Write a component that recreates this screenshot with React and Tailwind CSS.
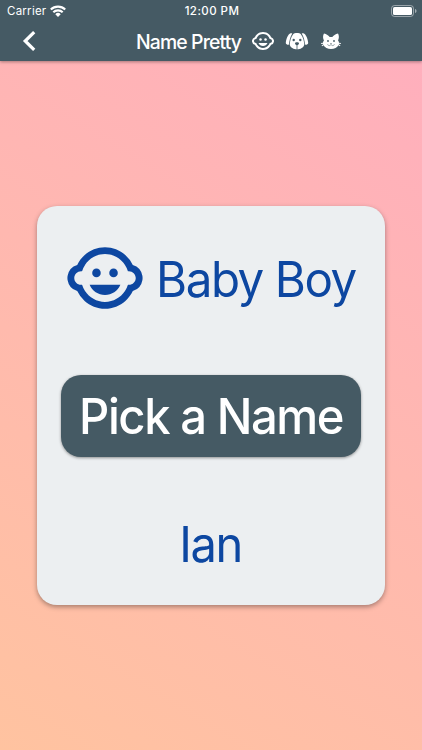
import { MdChildCare } from 'react-icons/md';

function DogIcon({ className }) {
  return (
    <svg viewBox="0 0 24 24" fill="currentColor" className={className}>
      <path d="M5.600 4.200C3 4.700 1 10.600 .8 13.900C.8 15.200 2.700 15.900 4 15.600C4.400 12 5 8 7.300 4.600C6.800 4.200 6.200 4.100 5.600 4.200Z" />
      <path d="M18.400 4.200C21 4.700 23 10.600 23.200 13.900C23.200 15.200 21.300 15.900 20 15.600C19.600 12 19 8 16.700 4.600C17.200 4.200 17.800 4.100 18.400 4.200Z" />
      <path d="M12 4C10.300 4 9.100 4.400 8.300 5C5.900 8 5 12 4.700 15.700C5.500 18.500 8.500 20.300 12 20.300C15.500 20.300 18.500 18.500 19.300 15.700C19 12 18.100 8 15.700 5C14.900 4.400 13.700 4 12 4Z" />
      <g fill="#455a64">
        <circle cx="8.700" cy="11" r="1.200" />
        <circle cx="15.300" cy="11" r="1.200" />
        <path d="M12 13.300c1.300 0 2 .4 2 1.100s-.9 1.500-1.600 1.900v4.100h-.8v-4.100c-.7-.4-1.600-1.200-1.600-1.900s.7-1.100 2-1.100z" />
      </g>
    </svg>
  );
}

function CatIcon({ className }) {
  return (
    <svg viewBox="0 0 24 24" fill="currentColor" className={className}>
      <path d="M12,8L10.67,8.09C9.81,7.07 7.4,4.5 5,4.5C5,4.5 3.03,7.46 4.96,11.41C4.41,12.24 4.07,12.67 4,13.66L2.07,13.95L2.28,14.93L4.04,14.67L4.18,15.38L2.61,16.32L3.08,17.21L4.53,16.32C5.68,18.76 8.59,20 12,20C15.41,20 18.32,18.76 19.47,16.32L20.92,17.21L21.39,16.32L19.82,15.38L19.96,14.67L21.72,14.93L21.93,13.95L20,13.66C19.93,12.67 19.59,12.24 19.04,11.41C20.97,7.46 19,4.5 19,4.5C16.6,4.5 14.19,7.07 13.33,8.09L12,8Z" />
      <g fill="#455a64">
        <circle cx="9" cy="12" r="0.9" />
        <circle cx="15" cy="12" r="0.9" />
        <path d="M11.100 14.200h1.800l-.9 1.300z" />
      </g>
      <path d="M8.500 15.200c.4 1.800 3 1.900 3.500.3c.5 1.600 3.100 1.500 3.500-.3" fill="none" stroke="#455a64" strokeWidth="0.5" />
    </svg>
  );
}

function StatusBar() {
  return (
    <div className="grid h-[22px] grid-cols-3 items-center pl-[7px] pr-[5px]">
      <div className="flex items-center gap-[4px]">
        <span className="pt-[2px] text-[11.5px] leading-none tracking-[0.25px]">Carrier</span>
        <svg viewBox="0 0 16 12" className="mb-px h-[12px] w-[16px]" fill="none" stroke="currentColor" strokeWidth="2.1">
          <path d="M0.8 4.6a10.2 10.2 0 0 1 14.4 0" />
          <path d="M3.3 7.3a6.6 6.6 0 0 1 9.4 0" />
          <path d="M8 12L5.3 9.2a3.8 3.8 0 0 1 5.4 0z" fill="currentColor" stroke="none" />
        </svg>
      </div>
      <span className="pt-[2px] text-center text-[11.5px] font-medium leading-none tracking-[0.45px]">12:00 PM</span>
      <svg viewBox="0 0 26 12" className="mb-px h-[12px] w-[26px] justify-self-end">
        <rect x="0.5" y="0.5" width="22" height="11" rx="3" fill="none" stroke="#fff" strokeOpacity="0.45" />
        <rect x="2" y="2" width="19" height="8" rx="1.6" fill="#fff" />
        <path d="M24 4v4c1-.3 1.5-1 1.5-2s-.5-1.7-1.5-2z" fill="#fff" fillOpacity="0.5" />
      </svg>
    </div>
  );
}

function Header() {
  return (
    <header className="relative z-10 h-[61px] bg-[#455a64] text-white shadow-[0_1px_3px_rgba(0,0,0,0.35)]">
      <StatusBar />
      <div className="flex h-[38px] items-center">
        <button className="ml-[22px] w-[14px]" aria-label="Back">
          <svg viewBox="0 0 14 20" className="h-[20px] w-[14px]" fill="none" stroke="currentColor" strokeWidth="3.2">
            <path d="M12.2 1.1L3.2 10L12.2 18.9" />
          </svg>
        </button>
        <h1 className="ml-[100px] w-[106px] origin-left scale-x-[0.97] whitespace-nowrap pt-px text-[20px] font-medium leading-none tracking-[-0.9px]">
          Name Pretty
        </h1>
        <div className="ml-[9px] flex items-center gap-[10px]">
          <MdChildCare className="h-[24px] w-[24px]" />
          <DogIcon className="h-[24px] w-[24px]" />
          <CatIcon className="h-[24px] w-[24px]" />
        </div>
      </div>
    </header>
  );
}

export default function App() {
  return (
    <div className="flex h-[750px] w-[422px] flex-col overflow-hidden font-['Inter',sans-serif]">
      <Header />
      <main className="flex flex-1 flex-col items-center bg-[linear-gradient(31.5deg,#ffc3a0,#ffafbd)] pt-[145px]">
        <div className="flex h-[399px] w-[348px] flex-col items-center rounded-[20px] bg-[#eceff1] text-[#0d47a1] shadow-[0_2px_5px_rgba(0,0,0,0.35)]">
          <div className="mt-[31px] flex h-[82px] items-center">
            <MdChildCare className="h-[82px] w-[82px]" />
            <span className="ml-[10px] w-[203px] origin-left scale-x-[0.97] whitespace-nowrap pt-[2px] text-[49px] leading-none tracking-[-1.5px]">
              Baby Boy
            </span>
          </div>
          <button className="mt-[56px] h-[82px] w-[300px] whitespace-nowrap rounded-[20px] bg-[#455a64] pt-px text-[49px] font-medium leading-none tracking-[-1.5px] text-white shadow-[0_1px_3px_rgba(0,0,0,0.4)]">
            <span className="inline-block scale-x-[0.963]">Pick a Name</span>
          </button>
          <p className="mt-[63px] scale-x-[0.96] pr-px text-[49px] leading-none tracking-[-1.5px]">Ian</p>
        </div>
      </main>
    </div>
  );
}
